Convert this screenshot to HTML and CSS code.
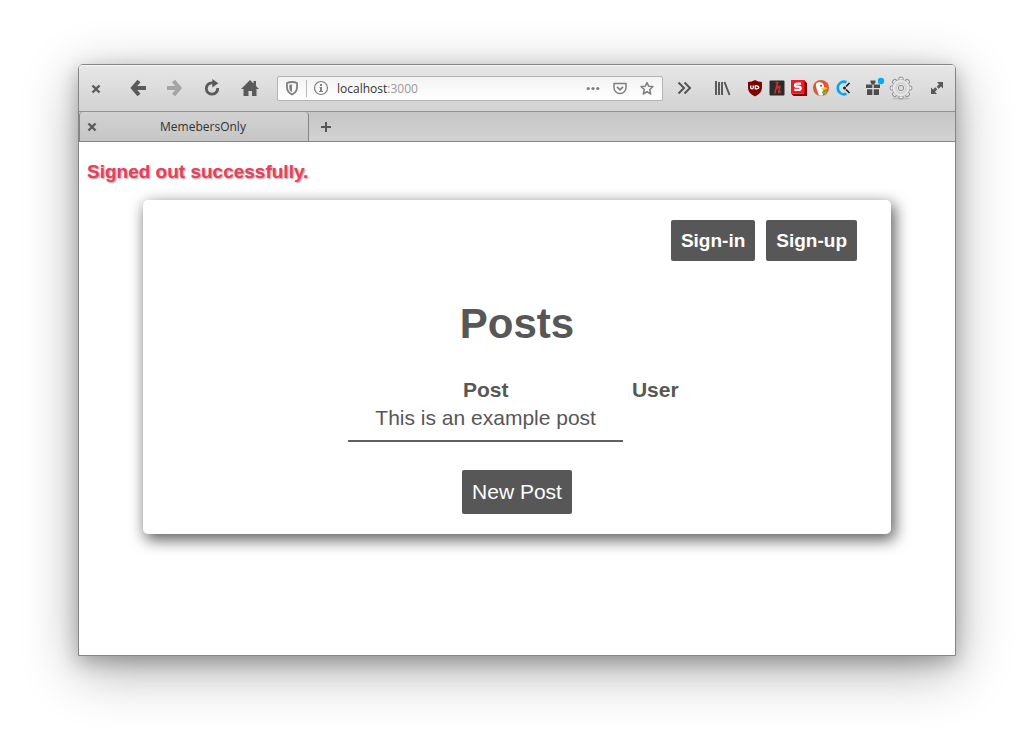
FILE: index.html
```html
<!DOCTYPE html>
<html lang="en">
<head>
<meta charset="utf-8">
<title>MemebersOnly</title>
<link rel="stylesheet" href="styles.css">
</head>
<body>
<div class="window">
  <header class="toolbar">
    <button class="tool close" aria-label="Close window"><svg viewBox="0 0 24 24"><path d="M8.500 9.500l7 7M15.500 9.500l-7 7" stroke="#5a5a5a" stroke-width="2.400"/></svg></button>
    <button class="tool back" aria-label="Back"><svg viewBox="0 0 24 24"><path d="M13 5L7 12l6 7M7 12h13" fill="none" stroke="#5a5a5a" stroke-width="4"/></svg></button>
    <button class="tool" aria-label="Forward"><svg viewBox="0 0 24 24"><path d="M11.500 5L17.500 12l-6 7M17.500 12H5" fill="none" stroke="#a5a5a5" stroke-width="4"/></svg></button>
    <button class="tool reload" aria-label="Reload"><svg viewBox="0 0 24 24"><path d="M17.700 12a5.700 5.700 0 1 1-5.700-5.200h1.500" fill="none" stroke="#5a5a5a" stroke-width="2.800"/><path d="M12.300 3l6 4.200-6 4.300z" fill="#5a5a5a"/></svg></button>
    <button class="tool" aria-label="Home"><svg viewBox="0 0 24 24"><path d="M12 4l3.500 3.500V5H18v5l3 3h-2.500v7H14v-5h-3.500v5h-5v-7H3z" fill="#5a5a5a"/></svg></button>
    <div class="address">
      <svg viewBox="0 0 24 24"><path d="M12 6c2 0 4 .5 5 1v4.500c0 3.500-1.700 5.300-5 7-3.300-1.700-5-3.500-5-7V7c1-.5 3-1 5-1z" fill="none" stroke="#808080" stroke-width="1.800"/><path d="M12 8.500c-1.300 0-2 .2-2.700.5v3c0 2 .8 3 2.700 4z" fill="#808080"/></svg>
      <span class="divider"></span>
      <svg viewBox="0 0 24 24"><circle cx="12" cy="12" r="6.500" fill="none" stroke="#808080" stroke-width="1.200"/><path d="M11 8h2v2h-2zM10.500 11H13v4h1v1h-4v-1h1v-3h-.5z" fill="#808080"/></svg>
      <span class="url">localhost<span class="port">:3000</span></span>
      <button class="tool" aria-label="Page actions"><svg viewBox="0 0 24 24"><g fill="#808080"><circle cx="7.200" cy="12.500" r="1.600"/><circle cx="12" cy="12.500" r="1.600"/><circle cx="16.800" cy="12.500" r="1.600"/></g></svg></button>
      <button class="tool" aria-label="Save to Pocket"><svg viewBox="0 0 24 24"><path d="M6 7.500h12v4a6 6 0 0 1-12 0z" fill="none" stroke="#808080" stroke-width="1.500" stroke-linejoin="round"/><path d="M9 10.800l3 3 3-3" fill="none" stroke="#808080" stroke-width="1.700"/></svg></button>
      <button class="tool" aria-label="Bookmark"><svg viewBox="0 0 24 24"><path d="M12 6.500l1.700 3.800 4.200.3-3.200 2.900 1 4.500L12 15.700l-3.700 2.300 1-4.500-3.200-2.900 4.200-.3z" fill="none" stroke="#808080" stroke-width="1.500" stroke-linejoin="round"/></svg></button>
    </div>
    <button class="tool more" aria-label="More tools"><svg viewBox="0 0 24 24"><path d="M6.500 6.500L12 12l-5.500 5.500M12.500 6.500L18 12l-5.500 5.500" fill="none" stroke="#555" stroke-width="2"/></svg></button>
    <button class="tool library" aria-label="Library"><svg viewBox="0 0 24 24"><path d="M6 5v14M9 6v13M12 6v13M14.500 6l5 13" stroke="#555" stroke-width="1.900"/></svg></button>
    <div class="extensions">
      <button class="tool" aria-label="uBlock Origin"><svg viewBox="0 0 22 22"><path d="M11 3c2 1.300 4.500 2 7 2v5c0 5-2.500 7-7 9.500C6.500 17 4 15 4 10V5c2.500 0 5-.7 7-2z" fill="#800000"/><path d="M6.700 8.500v2q0 1.300 1.300 1.300t1.300-1.300v-2M11.300 8.800v3H12.500q2.200 0 2.200-1.500t-2.200-1.500z" fill="none" stroke="#fff" stroke-width="1.300"/></svg></button>
      <button class="tool" aria-label="Hypothesis"><svg viewBox="0 0 22 22"><rect x="3.500" y="3.500" width="15" height="15" rx="1" fill="#2b2b2b"/><path d="M9.500 5.500h2.200L8.700 16.500M9.800 12.500Q14 7.800 14 10L12.500 15q0 1.500 2.200-.8" fill="none" stroke="#c83232" stroke-width="1.600"/></svg></button>
      <button class="tool" aria-label="Stylish"><svg viewBox="0 0 22 22"><path d="M3 16.500h13V3l3 3v13H5.500z" fill="#8b0008"/><rect x="3" y="3" width="13.500" height="13.500" fill="#ec1c24"/><path d="M13 6.700H9.200q-2.200 0-2.200 1.500t2.200 1.500h1.300q2.200 0 2.200 1.600t-2.200 1.500H6.300" fill="none" stroke="#fff" stroke-width="2.200"/></svg></button>
      <button class="tool" aria-label="DuckDuckGo"><svg viewBox="0 0 22 22"><circle cx="11" cy="11" r="8" fill="#de5833"/><path d="M9 18.500C7.500 14 5 9 6.300 6.500 8 4 14 5 14 9.500c0 3-1.500 4-1 9z" fill="#fff"/><path d="M11.500 11q3.500-1.500 6 0-1 2-5.500 2z" fill="#fdd20a"/><path d="M12 14.500l4.500-1v4l-4.500-1z" fill="#65bc46"/><circle cx="11" cy="8.700" r="1" fill="#2d4f8e"/></svg></button>
      <button class="tool" aria-label="Clockify"><svg viewBox="0 0 22 22"><path d="M14.500 5.200a6.300 6.300 0 1 0 0 11.600" fill="none" stroke="#03a9f4" stroke-width="2.600"/><path d="M14 9.500l3.500-3.500M14 12.500l3.500 3.500" stroke="#222" stroke-width="1.700"/><circle cx="12.500" cy="11" r="1.500" fill="#222"/></svg></button>
    </div>
    <button class="tool gift" aria-label="What's new"><svg viewBox="0 0 24 24"><path d="M5 8.500h6.300V12H5zM12.700 8.500H19V12h-6.300zM6 13.200h5.300V19H6zM12.700 13.200H18V19h-5.300zM9.500 4.500h5v2l-1.500 2h-2l-1.500-2z" fill="#4d4d4d"/><circle cx="20" cy="5" r="3.200" fill="#00adf0"/></svg></button>
    <button class="tool gear" aria-label="Menu"><svg viewBox="0 0 24 24"><ellipse cx="12" cy="22.500" rx="9" ry="1.200" fill="#aaa" opacity=".5"/><g id="teeth" fill="#e8e8e8" stroke="#8c8c8c" stroke-width="1"><rect x="9.800" y="1.200" width="4.400" height="21.600" rx="1.500"/><rect x="9.800" y="1.200" width="4.400" height="21.600" rx="1.500" transform="rotate(45 12 12)"/><rect x="9.800" y="1.200" width="4.400" height="21.600" rx="1.500" transform="rotate(90 12 12)"/><rect x="9.800" y="1.200" width="4.400" height="21.600" rx="1.500" transform="rotate(135 12 12)"/></g><circle cx="12" cy="12" r="8.600" fill="#e6e6e6" stroke="#a2a2a2" stroke-width=".5"/><circle cx="12" cy="12" r="5" fill="none" stroke="#d0d0d0" stroke-width="2"/><circle cx="12" cy="12" r="2.700" fill="#dcdcdc" stroke="#909090"/></svg></button>
    <button class="tool expand" aria-label="Maximize"><svg viewBox="0 0 24 24"><path d="M18 6v6.500l-2-2-2.300 2.200-2-2L14 8.300l-2-2.300zM6 18v-6.500l2 2 2.300-2.200 2 2L10 15.700l2 2.300z" fill="#5a5a5a"/></svg></button>
  </header>
  <nav class="tabs">
    <div class="tab">
      <button class="tool" aria-label="Close tab"><svg viewBox="0 0 24 24"><path d="M8.500 8.500l7 7M15.500 8.500l-7 7" stroke="#5a5a5a" stroke-width="2.400"/></svg></button>
      <span class="tab-title">MemebersOnly</span>
    </div>
    <button class="tool add" aria-label="New tab"><svg viewBox="0 0 24 24"><path d="M12 7v10M7 12h10" stroke="#555" stroke-width="2"/></svg></button>
  </nav>
  <main class="page">
    <p class="notice">Signed out successfully.</p>
    <section class="card">
      <div class="account">
        <a class="btn strong" href="#">Sign-in</a>
        <a class="btn strong" href="#">Sign-up</a>
      </div>
      <h1>Posts</h1>
      <table class="posts">
        <thead><tr><th>Post</th><th class="user">User</th></tr></thead>
        <tbody><tr><td class="entry">This is an example post</td></tr></tbody>
      </table>
      <a class="btn" href="#">New Post</a>
    </section>
  </main>
</div>
</body>
</html>
```
FILE: styles.css
```css
* {
  box-sizing: border-box;
}

body {
  margin: 0;
  min-height: 100vh;
  padding: 64px 78px 92px;
  display: flex;
  background: #fff;
  font-family: "Liberation Sans", Arial, sans-serif;
}

.window {
  flex: 1;
  display: flex;
  flex-direction: column;
  border: 1px solid #858585;
  border-radius: 5px 5px 0 0;
  background: #fff;
  box-shadow: 0 14px 56px rgba(0, 0, 0, 0.32), 0 6px 20px rgba(0, 0, 0, 0.26);
}

.toolbar {
  display: flex;
  align-items: center;
  height: 47px;
  border-bottom: 1px solid #929292;
  border-radius: 4px 4px 0 0;
  background: linear-gradient(#e7e7e7, #d2d2d2);
  box-shadow: inset 0 1px #f4f4f4;
}

.tool {
  display: flex;
  flex: none;
  align-items: center;
  justify-content: center;
  width: 36px;
  height: 24px;
  padding: 0;
  border: 0;
  background: none;
}

.tool svg,
.address svg {
  flex: none;
  width: 24px;
  height: 24px;
}

.close {
  width: 34px;
}

.back {
  margin-left: 7px;
}

.reload {
  width: 40px;
}

.address {
  display: flex;
  flex: 1;
  align-items: center;
  height: 25px;
  margin-left: 9px;
  padding: 0 2px;
  border: 1px solid #b4b4b4;
  border-radius: 2px;
  background: linear-gradient(#f3f3f3, #fff);
}

.address .tool {
  width: 27px;
}

.divider {
  width: 1px;
  height: 17px;
  margin: 0 2px;
  background: #bbb;
}

.url {
  flex: 1;
  margin-left: 4px;
  padding-top: 1px;
  color: #333;
  font: 12px/18px "Open Sans", sans-serif;
}

.port {
  color: #999;
}

.more {
  width: 42px;
}

.library {
  width: 34px;
}

.extensions {
  display: flex;
  margin: 0 5px;
}

.extensions .tool,
.extensions svg {
  width: 22px;
  height: 22px;
}

.gift,
.gear {
  width: 28px;
}

.expand {
  margin-left: 4px;
}

.tabs {
  display: flex;
  align-items: center;
  height: 30px;
  border-bottom: 1px solid #858585;
  background: linear-gradient(#c6c6c6, #d2d2d2);
}

.tab {
  display: flex;
  align-items: center;
  width: 230px;
  height: 29px;
  border: solid #858585;
  border-width: 0 1px;
  border-radius: 4px 4px 0 0;
  background: linear-gradient(#d2d2d2, #c6c6c6);
}

.tab .tool {
  width: 24px;
}

.tab-title {
  flex: 1;
  padding-right: 6px;
  color: #333;
  font: 12px/18px "Open Sans", sans-serif;
  text-align: center;
}

.add {
  width: 34px;
}

.page {
  flex: 1;
  padding: 19px 8px;
  color: #575757;
}

.notice {
  margin: 0 0 17px;
  color: #e83e60;
  font-size: 19px;
  font-weight: bold;
  line-height: 22px;
  text-shadow: 1px 1px 2px #999;
}

.card {
  display: flex;
  flex-direction: column;
  align-items: center;
  margin: 0 56px;
  padding: 20px 34px;
  border-radius: 5px;
  font-size: 21px;
  line-height: 24px;
  box-shadow: 3px 5px 15px 1px #606060;
}

.account {
  display: flex;
  align-self: flex-end;
  gap: 11px;
}

.btn {
  padding: 10px;
  border-radius: 2px;
  background: #575757;
  color: #fff;
  text-decoration: none;
}

.strong {
  font-size: 19px;
  font-weight: bold;
  line-height: 21px;
}

h1 {
  margin: 39px 0 28px;
  font-size: 42px;
  line-height: 48px;
}

.posts {
  margin-bottom: 26px;
  border-spacing: 2px;
  text-align: center;
}

.posts th {
  padding: 0;
}

.posts .user {
  padding: 0 7px;
}

.posts .entry {
  padding: 2px 27px 10px;
  border-bottom: 2px solid #606060;
}
```
